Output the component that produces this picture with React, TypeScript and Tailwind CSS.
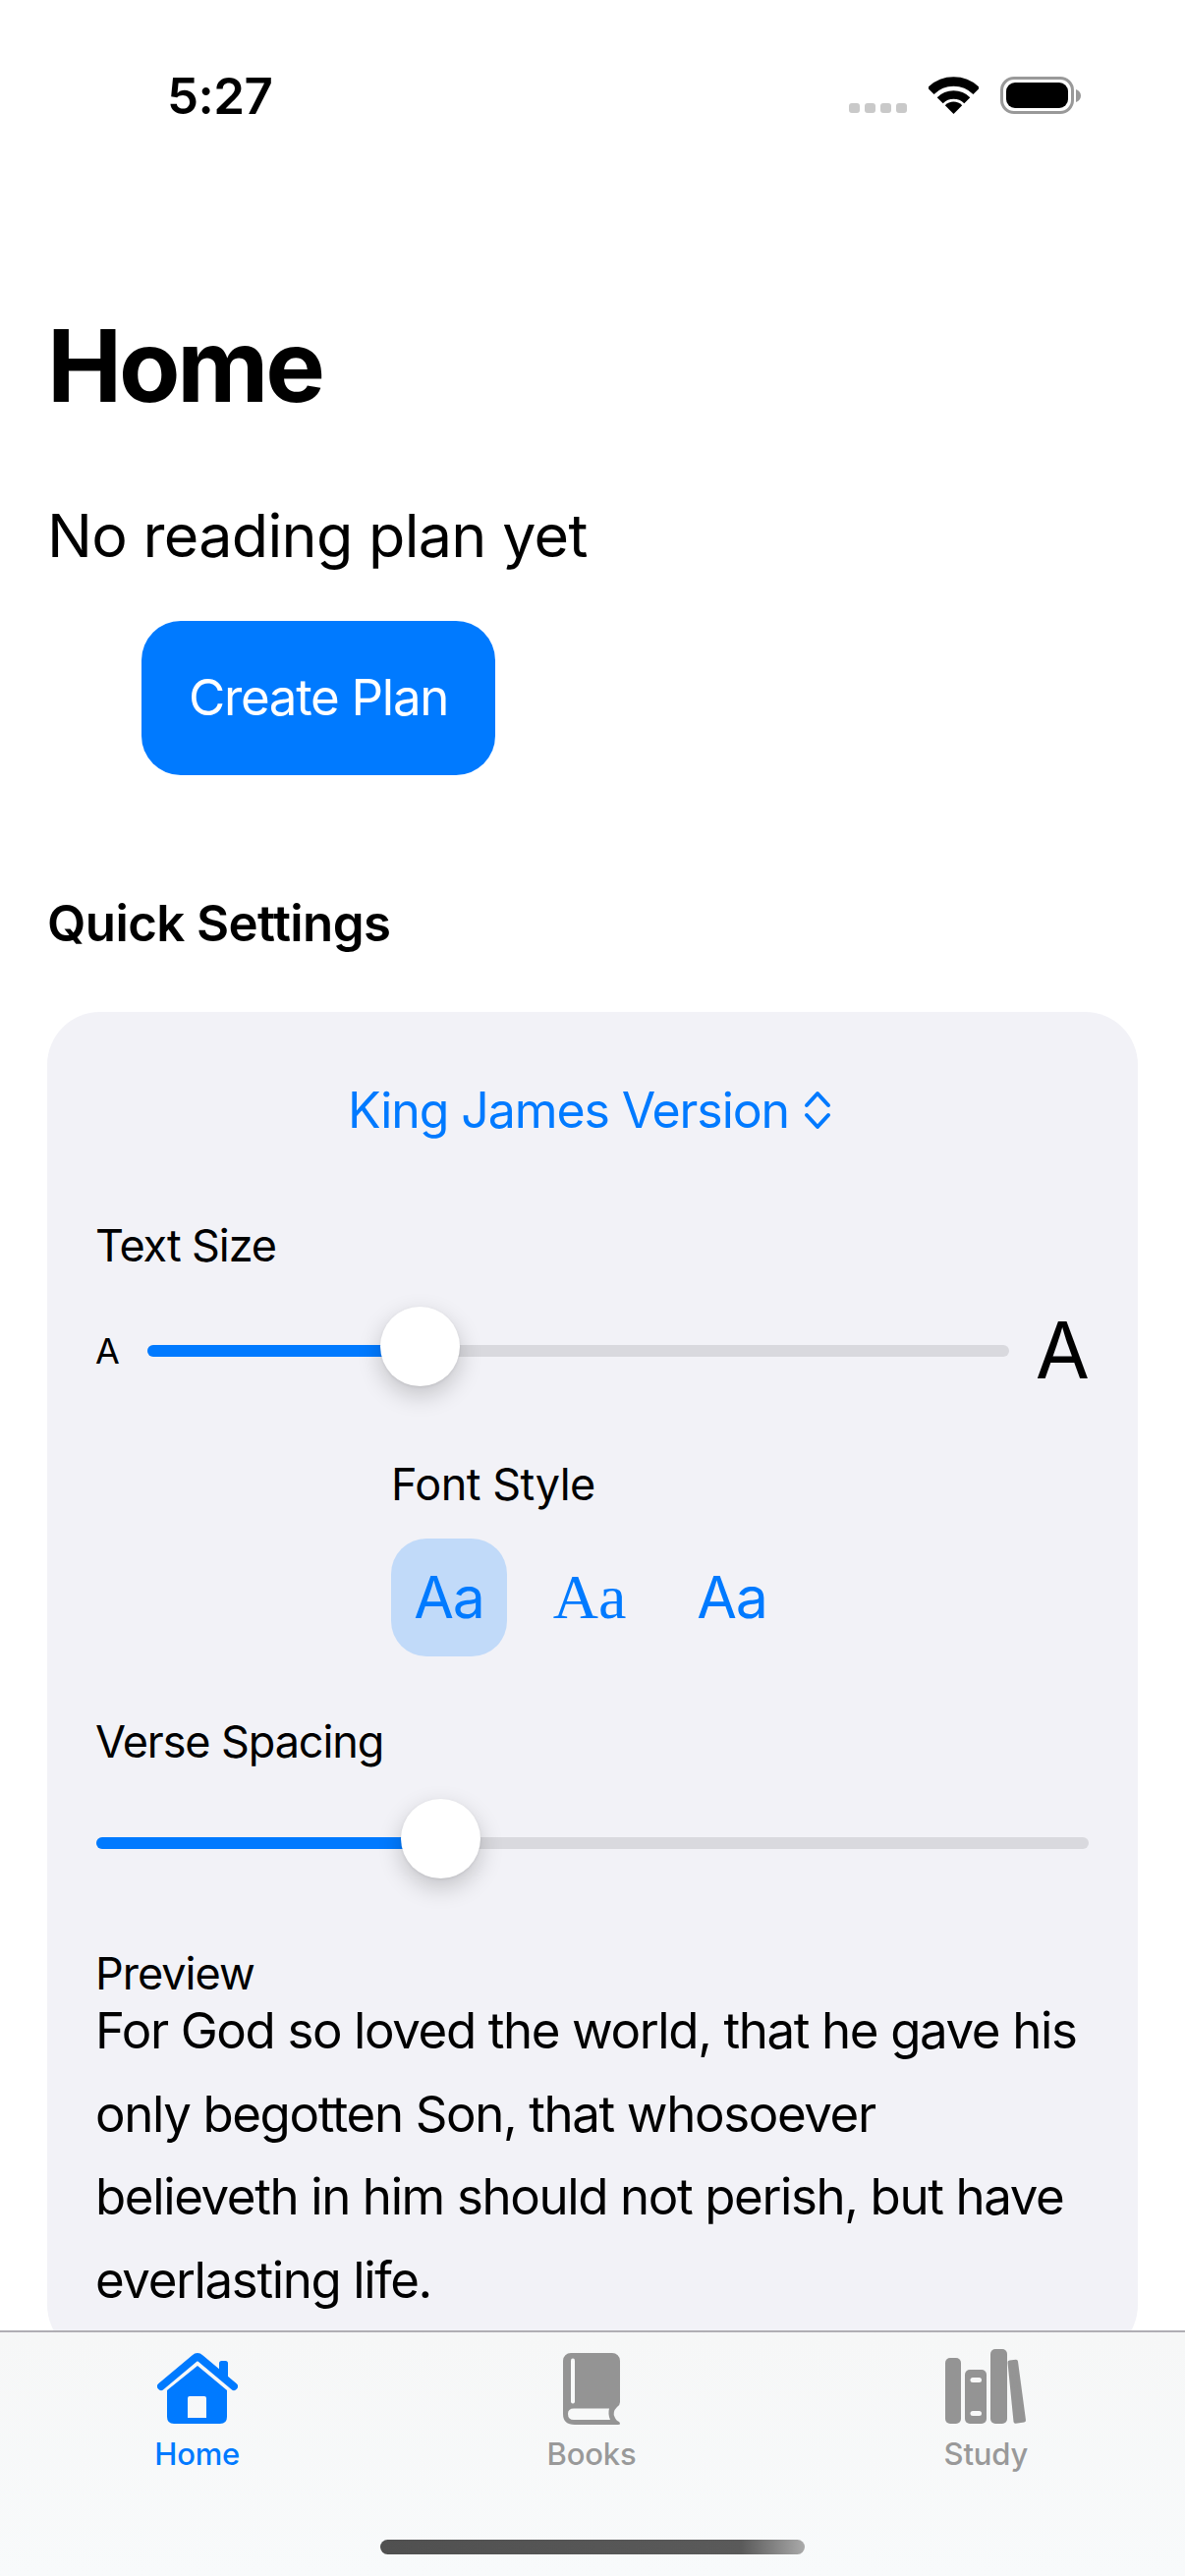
const BLUE = "#007aff";

function Wifi() {
  return (
    <svg width="51" height="38" viewBox="0 0 51 38" fill="none">
      <path d="M2.2 14.7A33 33 0 0 1 48.8 14.7" stroke="#000" strokeWidth="9.5" />
      <path d="M11.7 24.2A19.5 19.5 0 0 1 39.3 24.2" stroke="#000" strokeWidth="8.5" />
      <path d="M25.5 38L16.8 29.2A12.3 12.3 0 0 1 34.2 29.2Z" fill="#000" />
    </svg>
  );
}

function Battery() {
  return (
    <div className="flex items-center">
      <div className="w-[75px] h-[38px] rounded-[14px] border-[3px] border-[#999999] p-[3px]">
        <div className="w-full h-full rounded-[9px] bg-black" />
      </div>
      <svg width="5" height="13" viewBox="0 0 5 13" className="ml-[2px]">
        <path d="M0 0C3 1 5 3.500 5 6.500S3 12 0 13Z" fill="#999999" />
      </svg>
    </div>
  );
}

function StatusBar() {
  return (
    <div className="h-[174px] flex items-start justify-between pl-[170px] pr-[106px] pt-[69px]">
      <div className="text-[51px] leading-[58px] font-semibold tracking-[-0.5px] text-black">5:27</div>
      <div className="flex items-end h-[38px] mt-[9px]">
        <div className="flex gap-[5px] mb-[1px] mr-[22px]">
          {[0, 1, 2, 3].map((i) => (
            <div key={i} className="w-[11px] h-[10px] rounded-[3px] bg-[#c9c9c9]" />
          ))}
        </div>
        <Wifi />
        <div className="ml-[22px]">
          <Battery />
        </div>
      </div>
    </div>
  );
}

function Chevrons() {
  return (
    <svg width="28" height="40" viewBox="0 0 28 40" fill="none" stroke={BLUE} strokeWidth="4" strokeLinecap="round" strokeLinejoin="round">
      <path d="M3 15L14 3L25 15" />
      <path d="M3 25L14 37L25 25" />
    </svg>
  );
}

function Slider({ fill, thumb }: { fill: string; thumb: string }) {
  return (
    <div className="relative flex-1 h-[84px] flex items-center">
      <div className="w-full h-[12px] rounded-full bg-[#d9d9de] overflow-hidden">
        <div className={`h-full bg-[#007aff] ${fill}`} />
      </div>
      <div className={`absolute top-[-3px] w-[81px] h-[81px] rounded-full bg-white shadow-[0_9px_24px_rgba(0,0,0,0.2),0_1px_3px_rgba(0,0,0,0.08)] ${thumb}`} />
    </div>
  );
}

function HomeIcon() {
  return (
    <svg width="82" height="73" viewBox="0 0 82 73">
      <path d="M63 24V10.500Q63 8 65.500 8H69.500Q72 8 72 10.500V24Z" fill={BLUE} />
      <path d="M4 34L38 5.500Q41 3 44 5.500L78 34" fill="none" stroke={BLUE} strokeWidth="8" strokeLinecap="round" strokeLinejoin="round" />
      <path fillRule="evenodd" d="M41 13L71 38V65Q71 72 64 72H17Q10 72 10 65V38ZM33 44Q31 44 31 46V66H50V46Q50 44 48 44Z" fill={BLUE} />
    </svg>
  );
}

function BookIcon() {
  return (
    <svg width="58" height="73" viewBox="0 0 58 73">
      <path d="M8 0H50A8 8 0 0 1 58 8V50Q58 53 55 55Q50 60 52.500 65Q54 69 57 70Q58 71 58 72Q58 73 56 73H12Q0 73 0 62V8A8 8 0 0 1 8 0Z" fill="#949494" />
      <rect x="8" y="5.500" width="4" height="46" rx="2" fill="#f8f9f9" />
      <path d="M11 56.500H47Q45.500 62 48 68H11Q5 68 5 62Q5 56.500 11 56.500Z" fill="#f8f9f9" />
    </svg>
  );
}

function StudyIcon() {
  return (
    <svg width="83" height="77" viewBox="0 0 83 77">
      <rect x="0" y="9" width="16" height="67" rx="5" fill="#949494" />
      <rect x="20" y="21" width="22" height="55" rx="5" fill="#949494" />
      <rect x="25.500" y="29" width="11.500" height="5" rx="2.500" fill="#f8f9f9" />
      <rect x="25.500" y="63" width="11.500" height="5" rx="2.500" fill="#f8f9f9" />
      <rect x="46" y="0" width="17" height="76" rx="5" fill="#949494" />
      <path d="M65.500 13.500L72 12.800L80 72.500L71.500 73.800Z" fill="#949494" stroke="#949494" strokeWidth="4" strokeLinejoin="round" />
    </svg>
  );
}

function Tab({ label, active, children }: { label: string; active?: boolean; children: React.ReactNode }) {
  return (
    <div className="flex flex-col items-center">
      <div className="h-[78px] flex items-end justify-center">{children}</div>
      <div className={`mt-[11px] text-[31px] leading-[38px] font-medium tracking-[-0.2px] ${active ? "text-[#007aff]" : "text-[#999999]"}`}>{label}</div>
    </div>
  );
}

export default function App() {
  return (
    <div className="relative w-[1206px] h-[2622px] overflow-hidden bg-white text-black font-['Inter','Liberation_Sans',sans-serif]">
      <StatusBar />
      <main className="px-[48px]">
        <h1 className="mt-[138px] h-[120px] text-[102px] leading-[120px] font-bold tracking-[-3.2px]">Home</h1>
        <p className="mt-[78px] h-[70px] text-[61px] leading-[70px] tracking-[-0.7px]">No reading plan yet</p>
        <div className="mt-[52px] ml-[96px] w-[360px] h-[157px] rounded-[40px] bg-[#007aff] text-white text-[51px] tracking-[-1.3px] flex items-center justify-center">
          Create Plan
        </div>
        <h2 className="mt-[121px] h-[60px] text-[51px] leading-[60px] font-semibold tracking-[-0.6px]">Quick Settings</h2>
        <section className="mt-[60px] h-[1370px] rounded-[54px] bg-[#f2f2f7] pt-[70px] px-[49px]">
          <div className="h-[60px] pr-[6px] flex items-center justify-center gap-[15px] text-[#007aff] text-[50px] tracking-[-1.1px]">
            <span>King James Version</span>
            <Chevrons />
          </div>
          <div className="mt-[81px] h-[54px] text-[45px] leading-[54px] tracking-[-1.1px]">Text Size</div>
          <div className="mt-[38px] flex items-center">
            <span className="w-[53px] text-[36px]">A</span>
            <Slider fill="w-[280px]" thumb="left-[237px]" />
            <span className="ml-[27px] text-[80px] leading-[82px] mt-[-3px]">A</span>
          </div>
          <div className="mt-[67px] ml-[301px] h-[54px] text-[45px] leading-[54px] tracking-[-0.5px]">Font Style</div>
          <div className="mt-[28px] ml-[301px] flex gap-[26px] text-[#007aff] text-[59px] tracking-[-1.2px]">
            <div className="w-[118px] h-[120px] rounded-[36px] bg-[#c1daf9] flex items-center justify-center">Aa</div>
            <div className="w-[118px] h-[120px] flex items-center justify-center font-['Liberation_Serif',serif] text-[64px] tracking-[0px] pr-[2px]">Aa</div>
            <div className="w-[118px] h-[120px] flex items-center justify-center">Aa</div>
          </div>
          <div className="mt-[60px] h-[54px] text-[45px] leading-[54px] tracking-[-1.1px]">Verse Spacing</div>
          <div className="mt-[34px] mx-[1px] flex items-center">
            <Slider fill="w-[320px]" thumb="left-[310px]" />
          </div>
          <div className="mt-[70px] h-[42px] text-[45px] leading-[42px] tracking-[-1px]">Preview</div>
          <p className="mt-[-5px] text-[51px] leading-[84.5px] tracking-[-1.38px]">
            For God so loved the world, that he gave his only begotten Son, that whosoever believeth in him should not perish, but have everlasting life.
          </p>
        </section>
      </main>
      <nav className="absolute left-0 right-0 bottom-0 h-[250px] border-t-[2px] border-[#b0aeb4] bg-gradient-to-b from-[#f6f7f7] to-[#f8fafb]">
        <div className="grid grid-cols-3 pt-[16px] pr-[2px]">
          <Tab label="Home" active>
            <HomeIcon />
          </Tab>
          <Tab label="Books">
            <BookIcon />
          </Tab>
          <Tab label="Study">
            <StudyIcon />
          </Tab>
        </div>
        <div className="absolute left-[387px] top-[211px] w-[432px] h-[15px] rounded-full bg-gradient-to-r from-[#505050] via-[#5a5a5a] via-85% to-[#aaaaaa]" />
      </nav>
    </div>
  );
}
